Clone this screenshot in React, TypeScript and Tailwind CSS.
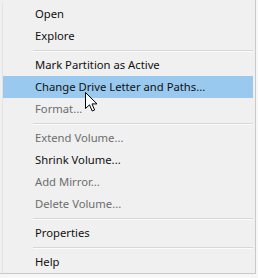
import React from 'react';

type Entry =
  | { kind: 'item'; label: string; disabled?: boolean; active?: boolean }
  | { kind: 'sep' };

const entries: Entry[] = [
  { kind: 'item', label: 'Open' },
  { kind: 'item', label: 'Explore' },
  { kind: 'sep' },
  { kind: 'item', label: 'Mark Partition as Active' },
  { kind: 'item', label: 'Change Drive Letter and Paths...', active: true },
  { kind: 'item', label: 'Format...', disabled: true },
  { kind: 'sep' },
  { kind: 'item', label: 'Extend Volume...', disabled: true },
  { kind: 'item', label: 'Shrink Volume...' },
  { kind: 'item', label: 'Add Mirror...', disabled: true },
  { kind: 'item', label: 'Delete Volume...', disabled: true },
  { kind: 'sep' },
  { kind: 'item', label: 'Properties' },
  { kind: 'sep' },
  { kind: 'item', label: 'Help' },
];

// Standard arrow pointer
function Cursor() {
  return (
    <svg width="13" height="20" viewBox="0 0 13 20" className="absolute left-[85px] top-[92px]">
      <path
        d="M0.5 0.5 L0.5 16.5 L4.5 12.8 L7.2 19 L9.6 18 L7 11.9 L12 11.9 Z"
        fill="#ffffff"
        stroke="#000000"
        strokeWidth="1"
        strokeLinejoin="round"
      />
    </svg>
  );
}

export default function App() {
  return (
    <div
      className="relative w-[258px] h-[278px] bg-[#f7f7f7] overflow-hidden"
      style={{ fontFamily: '"Noto Sans", "Open Sans", sans-serif' }}
    >
      <div className="w-[256px] h-[274px] bg-[#f0f0f0] border-r border-b border-[#c9c9c9] pt-[3px] pl-[2px] pr-[2px]">
        <div className="border-l border-[#e3e3e3] h-full">
          {entries.map((e, i) =>
            e.kind === 'sep' ? (
              <div key={i} className="h-[7px] flex flex-col justify-center pl-[30px]">
                <div className="h-px bg-[#d7d7d7]" />
                <div className="h-px bg-[#fbfbfb]" />
              </div>
            ) : (
              <div
                key={i}
                className={`h-[22px] flex items-center pl-[32px] text-[11.25px] ${
                  e.active ? 'bg-[#99c9ef]' : ''
                } ${e.disabled ? 'text-[#6d6d6d]' : 'text-[#111111]'}`}
              >
                {e.label}
              </div>
            )
          )}
        </div>
      </div>
      <Cursor />
    </div>
  );
}
